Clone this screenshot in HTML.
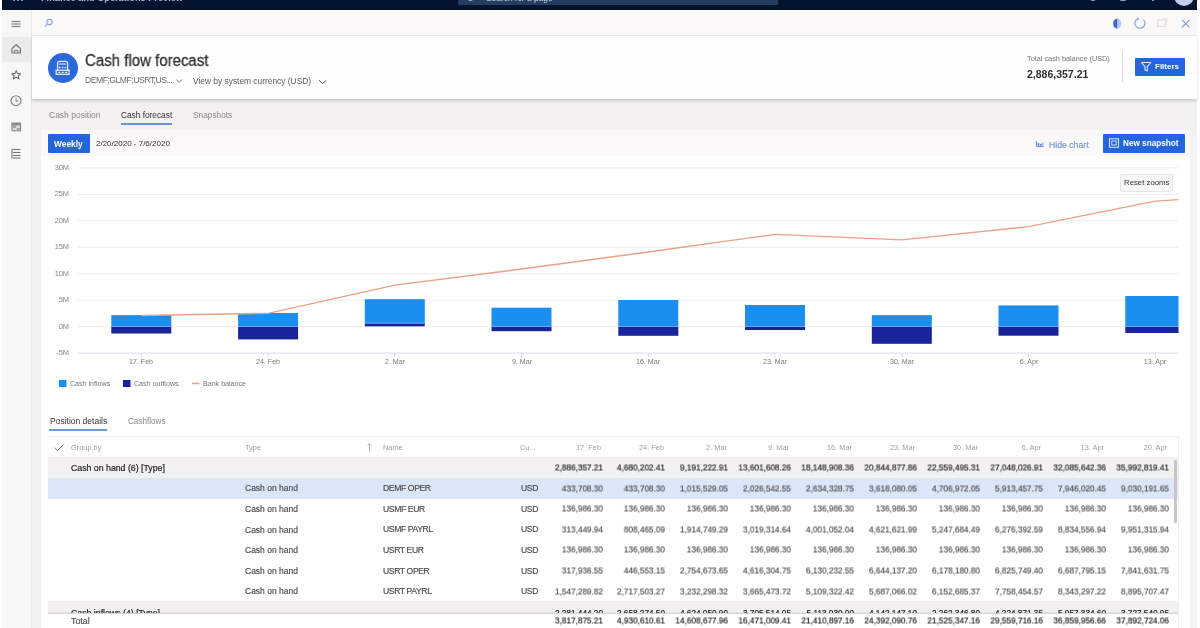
<!DOCTYPE html>
<html><head><meta charset="utf-8">
<style>
*{box-sizing:border-box;margin:0;padding:0}
html,body{width:1200px;height:628px;overflow:hidden;background:#fff;font-family:"Liberation Sans",sans-serif;color:#323130}
.a{position:absolute;white-space:nowrap;line-height:1}
#topbar{left:2px;top:0;width:1195px;height:10px;background:#04132e;overflow:hidden}
#side{left:2px;top:10px;width:30px;height:618px;background:#f7f7f6;border-right:1px solid #e6e6e6}
#search{left:32px;top:10px;width:1165px;height:26px;background:#faf9f8;border-bottom:1px solid #e8e8e8}
#header{left:32px;top:36px;width:1165px;height:62.5px;background:#fefefe;box-shadow:0 1.5px 2.5px rgba(0,0,0,.16)}
#tabs{left:32px;top:98px;width:1165px;height:530px;background:#f2f1f0}
#panel{left:41px;top:130px;width:1149px;height:498px;background:#fff}
#toolbar{left:41px;top:130px;width:1149px;height:26px;background:#faf9f8}
.btn{background:#2565dc;color:#fff;font-weight:700;border-radius:1px}
svg{position:absolute;left:0;top:0}
.ylab{left:39px;width:30px;text-align:right;font-size:7.5px;color:#858585;letter-spacing:-0.1px}
.xlab{top:359px;width:50px;text-align:center;font-size:7.1px;color:#7a7a7a}
.leg{top:381px;font-size:7.1px;color:#797775}
.hd{font-size:7.4px;color:#a09e9c}
.r{width:60px;text-align:right}
.gb{font-size:8.2px;font-weight:400;color:#252423;-webkit-text-stroke:0.2px #252423}
.gb.r,.td.r,.tb.r{width:80px}
.td.r,.gb.r,.tb.r{font-size:8.95px;transform:translateY(-0.5px) scaleX(.92);transform-origin:100% 0}
.td{font-size:8.2px;color:#4a4948;-webkit-text-stroke:0.15px #4a4948}
.tb{font-size:8.2px;font-weight:400;color:#252423;-webkit-text-stroke:0.2px #252423}


body>*{will-change:transform}</style></head><body>
<div class="a" id="topbar">
  <div class="a" style="left:11px;top:0;width:2px;height:1.2px;background:#8d97aa"></div><div class="a" style="left:15px;top:0;width:2px;height:1.2px;background:#8d97aa"></div><div class="a" style="left:19px;top:0;width:2px;height:1.2px;background:#8d97aa"></div>
  <div class="a" style="left:39px;top:-5.9px;font-size:9.2px;font-weight:700;color:#aeb8c8">Finance and Operations Preview</div>
  <div class="a" style="left:456px;top:-10px;width:320px;height:15px;background:#253d61;border-radius:1px"></div>
  <div class="a" style="left:484px;top:-5.8px;font-size:8.4px;color:#c9d3e2">Search for a page</div>
  <div class="a" style="left:466px;top:-3px;width:5px;height:4px;border:1px solid #aab6c8;border-radius:50%"></div>
  <div class="a" style="left:1049px;top:-5.2px;font-size:6.6px;color:#8892a4">USMF</div>
  <div class="a" style="left:1088px;top:-4px;width:6px;height:5px;border-radius:50%;background:#8a97ab"></div>
  <div class="a" style="left:1118px;top:-4px;width:6px;height:5px;border-radius:1px;background:#8a97ab"></div>
  <div class="a" style="left:1150px;top:-4px;width:2px;height:5px;background:#8a97ab"></div>
  <div class="a" style="left:1171.5px;top:-14px;width:20px;height:20px;border-radius:50%;background:#c3d0f0"></div>
</div>
<div class="a" id="side"></div>
<div class="a" style="left:2px;top:37px;width:29px;height:25px;background:#ebebea"></div>
<div class="a" id="search"></div>
<div class="a" id="tabs"></div>
<div class="a" id="header"></div>
<div class="a" style="left:1190px;top:130px;width:7px;height:498px;background:#f3f3f2"></div>
<div class="a" id="panel"></div>
<div class="a" id="toolbar"></div>

<!-- chrome icons -->
<svg width="1200" height="628" viewBox="0 0 1200 628">
  <!-- hamburger -->
  <g stroke="#7a7a7a" stroke-width="1.1">
    <line x1="11.5" y1="21.5" x2="20.5" y2="21.5"/><line x1="11.5" y1="24" x2="20.5" y2="24"/><line x1="11.5" y1="26.5" x2="20.5" y2="26.5"/>
  </g>
  <!-- search icon -->
  <g stroke="#86a9e6" stroke-width="1.1" fill="none">
    <circle cx="49.5" cy="22" r="2.6"/><line x1="47.6" y1="24" x2="45" y2="26.6"/>
  </g>
  <!-- home -->
  <path d="M12 53 V48.5 L16.2 44.8 L20.4 48.5 V53 Z" fill="none" stroke="#777" stroke-width="1.2" stroke-linejoin="round"/>
  <path d="M14.6 53 V50.4 H17.8 V53" fill="none" stroke="#777" stroke-width="1"/>
  <!-- star -->
  <path d="M16.2 70.6 L17.5 73.6 L20.6 73.8 L18.2 75.8 L19 78.9 L16.2 77.2 L13.4 78.9 L14.2 75.8 L11.8 73.8 L14.9 73.6 Z" fill="none" stroke="#6a6a6a" stroke-width="1.1" stroke-linejoin="round"/>
  <!-- clock -->
  <circle cx="16" cy="100.7" r="5" fill="none" stroke="#7a7a7a" stroke-width="1.1"/>
  <path d="M16 97.6 V101 H18.2" fill="none" stroke="#7a7a7a" stroke-width="1"/>
  <!-- workspace -->
  <rect x="11.3" y="122.5" width="9.8" height="8.8" fill="#8a8a8a"/>
  <rect x="12.4" y="125.4" width="7.6" height="4.8" fill="#d9d9d9"/>
  <rect x="12.4" y="125.4" width="3.6" height="2.4" fill="#9a9a9a"/>
  <rect x="16.8" y="128" width="3.2" height="2.2" fill="#a8a8a8"/>
  <!-- list -->
  <g stroke="#777" stroke-width="1.1">
    <line x1="12" y1="148.5" x2="12" y2="158.5"/>
    <line x1="13" y1="149.5" x2="20.5" y2="149.5"/><line x1="13" y1="152.5" x2="20.5" y2="152.5"/><line x1="13" y1="155.5" x2="20.5" y2="155.5"/><line x1="13" y1="158" x2="20.5" y2="158"/>
  </g>
  <!-- right icons in search row -->
  <path d="M1117.5 18.6 Q1113.2 19 1113.2 23.6 Q1113.2 28.2 1117.5 28.8 Z" fill="#3a6acf"/>
  <path d="M1117.5 18.6 Q1121.2 19.2 1121.2 23.6 Q1121.2 28 1117.5 28.8 Z" fill="#b4c8ee"/>
  <path d="M1143.4 19.6 A5 5 0 1 1 1137.6 18.8" fill="none" stroke="#86a6df" stroke-width="1.25"/>
  <path d="M1137 17.6 L1139 18.9 L1137.2 20.4" fill="none" stroke="#86a6df" stroke-width="0.9"/>
  <g fill="none" stroke="#e0dfde" stroke-width="1.1">
    <rect x="1157.5" y="20" width="8" height="6.5"/><path d="M1163 18.8 L1166.6 18.8 L1166.6 22"/>
  </g>
  <g stroke="#7d9edb" stroke-width="1.15">
    <line x1="1182" y1="19.8" x2="1189.5" y2="27.3"/><line x1="1189.5" y1="19.8" x2="1182" y2="27.3"/>
  </g>
</svg>

<!-- header contents -->
<div class="a" style="left:48px;top:52.5px;width:30.4px;height:30.4px;border-radius:50%;background:#2a68dc"></div>
<svg width="1200" height="628" viewBox="0 0 1200 628">
  <g transform="translate(0.6,0)"><g fill="none" stroke="#e8f0fd" stroke-width="1.3">
    <path d="M57 70.3 V63.4 Q57 61.3 59.1 61.3 H64.9 Q67 61.3 67 63.4 V70.3"/>
    <rect x="55.6" y="70.3" width="12.8" height="4"/>
  </g>
  <g fill="#e8f0fd">
    <rect x="58.6" y="63.5" width="6.8" height="1.1"/>
    <rect x="58.4" y="66.8" width="1.6" height="1.5"/><rect x="61.2" y="66.8" width="1.6" height="1.5"/><rect x="64" y="66.8" width="1.6" height="1.5"/>
    <rect x="57.6" y="71.8" width="2" height="1.2"/><rect x="61" y="71.8" width="2" height="1.2"/><rect x="64.4" y="71.8" width="2" height="1.2"/>
  </g>
  </g>
  <path d="M176.5 79.6 L179.2 82.4 L181.9 79.6" fill="none" stroke="#7a7877" stroke-width="0.9"/>
  <path d="M319 80.2 L322.6 83.6 L326.2 80.2" fill="none" stroke="#605e5c" stroke-width="1"/>
</svg>
<div class="a" style="left:84.5px;top:53px;font-size:15.8px;color:#323130;-webkit-text-stroke:0.3px #323130;transform:scaleX(0.95);transform-origin:0 0">Cash flow forecast</div>
<div class="a" style="left:85px;top:76.3px;font-size:8.6px;letter-spacing:-0.48px;color:#6e6c6a">DEMF;GLMF;USRT;US...</div>
<div class="a" style="left:193px;top:77px;font-size:8.4px;color:#605e5c">View by system currency (USD)</div>
<div class="a" style="left:1027px;top:55px;font-size:7.3px;color:#767472">Total cash balance (USD)</div>
<div class="a" style="left:1027px;top:69px;font-size:10.5px;font-weight:700;color:#323130">2,886,357.21</div>
<div class="a" style="left:1122px;top:51px;width:1px;height:31px;background:#e1dfdd"></div>
<div class="a btn" style="left:1135px;top:58px;width:50px;height:18px"></div>
<svg width="1200" height="628" viewBox="0 0 1200 628">
  <path d="M1141.5 62.5 H1150.8 L1147.3 66.6 V71 L1145 70 V66.6 Z" fill="none" stroke="#dfe9fb" stroke-width="1.1" stroke-linejoin="round"/>
</svg>
<div class="a" style="left:1154.5px;top:62.5px;font-size:8px;font-weight:700;color:#fff">Filters</div>

<!-- tabs -->
<div class="a" style="left:49px;top:111.4px;font-size:8.5px;color:#8a8886">Cash position</div>
<div class="a" style="left:121px;top:111.4px;font-size:8.3px;color:#323130">Cash forecast</div>
<div class="a" style="left:121px;top:122.5px;width:51px;height:2px;background:#6495dc"></div>
<div class="a" style="left:193px;top:111.4px;font-size:8.3px;color:#8a8886">Snapshots</div>

<!-- toolbar -->
<div class="a btn" style="left:48px;top:134px;width:42px;height:18.5px"></div>
<div class="a" style="left:54px;top:139.6px;font-size:8.4px;font-weight:700;color:#fff">Weekly</div>
<div class="a" style="left:95.5px;top:140px;font-size:8px;color:#323130">2/20/2020 - 7/6/2020</div>
<svg width="1200" height="628" viewBox="0 0 1200 628">
  <path d="M1036.5 141 V146.6 H1043.5" fill="none" stroke="#6b93da" stroke-width="1"/>
  <rect x="1037.6" y="142.8" width="1.8" height="3.4" fill="#6b93da"/><rect x="1040" y="143.8" width="1.6" height="2.4" fill="#6b93da"/><rect x="1042" y="142.4" width="1.4" height="3.8" fill="#8fb0e6"/>
</svg>
<div class="a" style="left:1049px;top:140.8px;font-size:8.7px;color:#7195d3;-webkit-text-stroke:0.15px #7195d3">Hide chart</div>
<div class="a btn" style="left:1103px;top:133.5px;width:81.5px;height:18.8px"></div>
<svg width="1200" height="628" viewBox="0 0 1200 628">
  <rect x="1109.5" y="138.8" width="9" height="8.5" fill="none" stroke="#dfe9fb" stroke-width="1"/>
  <rect x="1111.8" y="141" width="4.4" height="4" fill="none" stroke="#dfe9fb" stroke-width="0.9"/>
</svg>
<div class="a" style="left:1122.5px;top:140.3px;font-size:8.2px;font-weight:700;color:#fff">New snapshot</div>

<!--CHART-->
<svg width="1200" height="628" viewBox="0 0 1200 628">
<defs><clipPath id="plot"><rect x="78" y="150" width="1100.5" height="210"/></clipPath></defs>
<line x1="78" y1="167.9" x2="1178.5" y2="167.9" stroke="#ececec" stroke-width="1"/>
<line x1="78" y1="194.4" x2="1178.5" y2="194.4" stroke="#ececec" stroke-width="1"/>
<line x1="78" y1="220.8" x2="1178.5" y2="220.8" stroke="#ececec" stroke-width="1"/>
<line x1="78" y1="247.3" x2="1178.5" y2="247.3" stroke="#ececec" stroke-width="1"/>
<line x1="78" y1="273.7" x2="1178.5" y2="273.7" stroke="#ececec" stroke-width="1"/>
<line x1="78" y1="300.2" x2="1178.5" y2="300.2" stroke="#ececec" stroke-width="1"/>
<line x1="78" y1="326.7" x2="1178.5" y2="326.7" stroke="#ececec" stroke-width="1"/>
<line x1="78" y1="353.1" x2="1178.5" y2="353.1" stroke="#d5dde9" stroke-width="1"/>
<line x1="141.3" y1="353.1" x2="141.3" y2="357.6" stroke="#d5dde9" stroke-width="1"/>
<line x1="268.1" y1="353.1" x2="268.1" y2="357.6" stroke="#d5dde9" stroke-width="1"/>
<line x1="394.8" y1="353.1" x2="394.8" y2="357.6" stroke="#d5dde9" stroke-width="1"/>
<line x1="521.5" y1="353.1" x2="521.5" y2="357.6" stroke="#d5dde9" stroke-width="1"/>
<line x1="648.3" y1="353.1" x2="648.3" y2="357.6" stroke="#d5dde9" stroke-width="1"/>
<line x1="775.0" y1="353.1" x2="775.0" y2="357.6" stroke="#d5dde9" stroke-width="1"/>
<line x1="901.8" y1="353.1" x2="901.8" y2="357.6" stroke="#d5dde9" stroke-width="1"/>
<line x1="1028.5" y1="353.1" x2="1028.5" y2="357.6" stroke="#d5dde9" stroke-width="1"/>
<line x1="1155.3" y1="353.1" x2="1155.3" y2="357.6" stroke="#d5dde9" stroke-width="1"/>
<g clip-path="url(#plot)">
<rect x="111.3" y="315.1" width="60" height="11.4" fill="#1a8ff0"/>
<rect x="111.3" y="326.5" width="60" height="7.0" fill="#19239a"/>
<line x1="111.3" y1="326.5" x2="171.3" y2="326.5" stroke="#7fb6f2" stroke-width="0.8"/>
<rect x="238.1" y="313.0" width="60" height="13.5" fill="#1a8ff0"/>
<rect x="238.1" y="326.5" width="60" height="12.9" fill="#19239a"/>
<line x1="238.1" y1="326.5" x2="298.1" y2="326.5" stroke="#7fb6f2" stroke-width="0.8"/>
<rect x="364.8" y="299.2" width="60" height="24.0" fill="#1a8ff0"/>
<rect x="364.8" y="323.2" width="60" height="3.1" fill="#19239a"/>
<line x1="364.8" y1="323.2" x2="424.8" y2="323.2" stroke="#7fb6f2" stroke-width="0.8"/>
<rect x="491.5" y="307.7" width="60" height="18.8" fill="#1a8ff0"/>
<rect x="491.5" y="326.5" width="60" height="4.7" fill="#19239a"/>
<line x1="491.5" y1="326.5" x2="551.5" y2="326.5" stroke="#7fb6f2" stroke-width="0.8"/>
<rect x="618.3" y="300.0" width="60" height="26.5" fill="#1a8ff0"/>
<rect x="618.3" y="326.5" width="60" height="9.3" fill="#19239a"/>
<line x1="618.3" y1="326.5" x2="678.3" y2="326.5" stroke="#7fb6f2" stroke-width="0.8"/>
<rect x="745.0" y="305.0" width="60" height="21.5" fill="#1a8ff0"/>
<rect x="745.0" y="326.5" width="60" height="3.5" fill="#19239a"/>
<line x1="745.0" y1="326.5" x2="805.0" y2="326.5" stroke="#7fb6f2" stroke-width="0.8"/>
<rect x="871.8" y="315.1" width="60" height="11.4" fill="#1a8ff0"/>
<rect x="871.8" y="326.5" width="60" height="17.3" fill="#19239a"/>
<line x1="871.8" y1="326.5" x2="931.8" y2="326.5" stroke="#7fb6f2" stroke-width="0.8"/>
<rect x="998.5" y="305.4" width="60" height="21.1" fill="#1a8ff0"/>
<rect x="998.5" y="326.5" width="60" height="9.2" fill="#19239a"/>
<line x1="998.5" y1="326.5" x2="1058.5" y2="326.5" stroke="#7fb6f2" stroke-width="0.8"/>
<rect x="1125.3" y="296.0" width="60" height="30.5" fill="#1a8ff0"/>
<rect x="1125.3" y="326.5" width="60" height="6.5" fill="#19239a"/>
<line x1="1125.3" y1="326.5" x2="1185.3" y2="326.5" stroke="#7fb6f2" stroke-width="0.8"/>
<polyline points="141.3,315.5 268.0,313.3 394.8,285.2 521.5,269.0 648.3,252.0 775.0,234.4 901.8,239.8 1028.5,226.7 1155.3,201.2 1282.0,192.7" fill="none" stroke="#eba184" stroke-width="1.35" stroke-linejoin="round"/>
</g>
<rect x="59" y="380" width="7.5" height="7" fill="#1a8ff0"/>
<rect x="123" y="380" width="7.5" height="7" fill="#19239a"/>
<line x1="192" y1="383.5" x2="199.5" y2="383.5" stroke="#eba184" stroke-width="1.5"/>
</svg>
<div class="a ylab" style="top:163.9px">30M</div>
<div class="a ylab" style="top:190.4px">25M</div>
<div class="a ylab" style="top:216.8px">20M</div>
<div class="a ylab" style="top:243.3px">15M</div>
<div class="a ylab" style="top:269.7px">10M</div>
<div class="a ylab" style="top:296.2px">5M</div>
<div class="a ylab" style="top:322.7px">0M</div>
<div class="a ylab" style="top:349.1px">-5M</div>
<div class="a xlab" style="left:116.3px">17. Feb</div>
<div class="a xlab" style="left:243.1px">24. Feb</div>
<div class="a xlab" style="left:369.8px">2. Mar</div>
<div class="a xlab" style="left:496.5px">9. Mar</div>
<div class="a xlab" style="left:623.3px">16. Mar</div>
<div class="a xlab" style="left:750.0px">23. Mar</div>
<div class="a xlab" style="left:876.8px">30. Mar</div>
<div class="a xlab" style="left:1003.5px">6. Apr</div>
<div class="a xlab" style="left:1130.3px">13. Apr</div>
<div class="a leg" style="left:69.5px">Cash inflows</div>
<div class="a leg" style="left:133.5px">Cash outflows</div>
<div class="a leg" style="left:203px">Bank balance</div>
<div class="a" style="left:1120px;top:174px;width:53px;height:17.5px;background:#f7f7f7;border:1px solid #e6e6e6;border-radius:2px"></div>
<div class="a" style="left:1123.5px;top:179px;font-size:7.8px;color:#333">Reset zooms</div>
<!--GRID-->
<div class="a" style="left:49.5px;top:416.5px;font-size:8.5px;color:#323130">Position details</div>
<div class="a" style="left:49px;top:428.5px;width:58px;height:2px;background:#6a9be0"></div>
<div class="a" style="left:127.5px;top:418px;font-size:8.15px;color:#8a8886">Cashflows</div>
<div class="a" style="left:48px;top:436px;width:1130px;height:1px;background:#efedeb"></div>
<div class="a" style="left:48px;top:456.5px;width:1130px;height:1px;background:#e3e1df"></div>
<svg width="1200" height="628" viewBox="0 0 1200 628"><path d="M54.5 447.8 L57.5 450.6 L63.5 444.6" fill="none" stroke="#7a7a7a" stroke-width="1"/><path d="M369.5 452 V443.5 M367.6 445.4 L369.5 443.5 L371.4 445.4" fill="none" stroke="#a0a0a0" stroke-width="0.7"/></svg>
<div class="a hd" style="left:70.7px;top:444px">Group by</div>
<div class="a hd" style="left:245px;top:444px">Type</div>
<div class="a hd" style="left:382.7px;top:444px">Name</div>
<div class="a hd" style="left:520px;top:444px">Cu...</div>
<div class="a hd r" style="left:540.7px;top:444px">17. Feb</div>
<div class="a hd r" style="left:603.6px;top:444px">24. Feb</div>
<div class="a hd r" style="left:666.5px;top:444px">2. Mar</div>
<div class="a hd r" style="left:729.4px;top:444px">9. Mar</div>
<div class="a hd r" style="left:792.3px;top:444px">16. Mar</div>
<div class="a hd r" style="left:855.2px;top:444px">23. Mar</div>
<div class="a hd r" style="left:918.1px;top:444px">30. Mar</div>
<div class="a hd r" style="left:981.0px;top:444px">6. Apr</div>
<div class="a hd r" style="left:1043.9px;top:444px">13. Apr</div>
<div class="a hd r" style="left:1106.8px;top:444px">20. Apr</div>
<div class="a" style="left:48px;top:457px;width:1130px;height:20.5px;background:#f2f1f0"></div>
<div class="a" style="left:48px;top:477.5px;width:1130px;height:20.5px;background:#dbe6f8"></div>
<div class="a" style="left:48px;top:600.8px;width:1130px;height:13px;background:#f2f1f0"></div>
<div class="a gb" style="left:71px;top:463.9px;font-size:8.75px">Cash on hand (6) [Type]</div>
<div class="a gb r" style="left:522.5px;top:464.2px">2,886,357.21</div>
<div class="a gb r" style="left:585.4px;top:464.2px">4,680,202.41</div>
<div class="a gb r" style="left:648.3px;top:464.2px">9,191,222.91</div>
<div class="a gb r" style="left:711.2px;top:464.2px">13,601,608.26</div>
<div class="a gb r" style="left:774.1px;top:464.2px">18,148,908.36</div>
<div class="a gb r" style="left:837.0px;top:464.2px">20,844,877.86</div>
<div class="a gb r" style="left:899.9px;top:464.2px">22,559,495.31</div>
<div class="a gb r" style="left:962.8px;top:464.2px">27,048,026.91</div>
<div class="a gb r" style="left:1025.7px;top:464.2px">32,085,642.36</div>
<div class="a gb r" style="left:1088.6px;top:464.2px">35,992,819.41</div>
<div class="a td" style="left:245px;top:484.4px;font-size:8.5px">Cash on hand</div>
<div class="a td" style="left:382.7px;top:484.3px;font-size:8.6px;letter-spacing:-0.38px">DEMF OPER</div>
<div class="a td" style="left:521px;top:484.3px;font-size:8.6px;letter-spacing:-0.4px">USD</div>
<div class="a td r" style="left:522.5px;top:484.6px">433,708.30</div>
<div class="a td r" style="left:585.4px;top:484.6px">433,708.30</div>
<div class="a td r" style="left:648.3px;top:484.6px">1,015,529.05</div>
<div class="a td r" style="left:711.2px;top:484.6px">2,026,542.55</div>
<div class="a td r" style="left:774.1px;top:484.6px">2,634,328.75</div>
<div class="a td r" style="left:837.0px;top:484.6px">3,618,080.05</div>
<div class="a td r" style="left:899.9px;top:484.6px">4,706,972.05</div>
<div class="a td r" style="left:962.8px;top:484.6px">5,913,457.75</div>
<div class="a td r" style="left:1025.7px;top:484.6px">7,946,020.45</div>
<div class="a td r" style="left:1088.6px;top:484.6px">9,030,191.65</div>
<div class="a td" style="left:245px;top:505.0px;font-size:8.5px">Cash on hand</div>
<div class="a td" style="left:382.7px;top:504.9px;font-size:8.6px;letter-spacing:-0.38px">USMF EUR</div>
<div class="a td" style="left:521px;top:504.9px;font-size:8.6px;letter-spacing:-0.4px">USD</div>
<div class="a td r" style="left:522.5px;top:505.2px">136,986.30</div>
<div class="a td r" style="left:585.4px;top:505.2px">136,986.30</div>
<div class="a td r" style="left:648.3px;top:505.2px">136,986.30</div>
<div class="a td r" style="left:711.2px;top:505.2px">136,986.30</div>
<div class="a td r" style="left:774.1px;top:505.2px">136,986.30</div>
<div class="a td r" style="left:837.0px;top:505.2px">136,986.30</div>
<div class="a td r" style="left:899.9px;top:505.2px">136,986.30</div>
<div class="a td r" style="left:962.8px;top:505.2px">136,986.30</div>
<div class="a td r" style="left:1025.7px;top:505.2px">136,986.30</div>
<div class="a td r" style="left:1088.6px;top:505.2px">136,986.30</div>
<div class="a td" style="left:245px;top:525.5px;font-size:8.5px">Cash on hand</div>
<div class="a td" style="left:382.7px;top:525.4px;font-size:8.6px;letter-spacing:-0.38px">USMF PAYRL</div>
<div class="a td" style="left:521px;top:525.4px;font-size:8.6px;letter-spacing:-0.4px">USD</div>
<div class="a td r" style="left:522.5px;top:525.7px">313,449.94</div>
<div class="a td r" style="left:585.4px;top:525.7px">808,465.09</div>
<div class="a td r" style="left:648.3px;top:525.7px">1,914,749.29</div>
<div class="a td r" style="left:711.2px;top:525.7px">3,019,314.64</div>
<div class="a td r" style="left:774.1px;top:525.7px">4,001,052.04</div>
<div class="a td r" style="left:837.0px;top:525.7px">4,621,621.99</div>
<div class="a td r" style="left:899.9px;top:525.7px">5,247,684.49</div>
<div class="a td r" style="left:962.8px;top:525.7px">6,276,392.59</div>
<div class="a td r" style="left:1025.7px;top:525.7px">8,834,556.94</div>
<div class="a td r" style="left:1088.6px;top:525.7px">9,951,315.94</div>
<div class="a td" style="left:245px;top:546.1px;font-size:8.5px">Cash on hand</div>
<div class="a td" style="left:382.7px;top:546.0px;font-size:8.6px;letter-spacing:-0.38px">USRT EUR</div>
<div class="a td" style="left:521px;top:546.0px;font-size:8.6px;letter-spacing:-0.4px">USD</div>
<div class="a td r" style="left:522.5px;top:546.3px">136,986.30</div>
<div class="a td r" style="left:585.4px;top:546.3px">136,986.30</div>
<div class="a td r" style="left:648.3px;top:546.3px">136,986.30</div>
<div class="a td r" style="left:711.2px;top:546.3px">136,986.30</div>
<div class="a td r" style="left:774.1px;top:546.3px">136,986.30</div>
<div class="a td r" style="left:837.0px;top:546.3px">136,986.30</div>
<div class="a td r" style="left:899.9px;top:546.3px">136,986.30</div>
<div class="a td r" style="left:962.8px;top:546.3px">136,986.30</div>
<div class="a td r" style="left:1025.7px;top:546.3px">136,986.30</div>
<div class="a td r" style="left:1088.6px;top:546.3px">136,986.30</div>
<div class="a td" style="left:245px;top:566.7px;font-size:8.5px">Cash on hand</div>
<div class="a td" style="left:382.7px;top:566.6px;font-size:8.6px;letter-spacing:-0.38px">USRT OPER</div>
<div class="a td" style="left:521px;top:566.6px;font-size:8.6px;letter-spacing:-0.4px">USD</div>
<div class="a td r" style="left:522.5px;top:566.9px">317,936.55</div>
<div class="a td r" style="left:585.4px;top:566.9px">446,553.15</div>
<div class="a td r" style="left:648.3px;top:566.9px">2,754,673.65</div>
<div class="a td r" style="left:711.2px;top:566.9px">4,616,304.75</div>
<div class="a td r" style="left:774.1px;top:566.9px">6,130,232.55</div>
<div class="a td r" style="left:837.0px;top:566.9px">6,644,137.20</div>
<div class="a td r" style="left:899.9px;top:566.9px">6,178,180.80</div>
<div class="a td r" style="left:962.8px;top:566.9px">6,825,749.40</div>
<div class="a td r" style="left:1025.7px;top:566.9px">6,687,795.15</div>
<div class="a td r" style="left:1088.6px;top:566.9px">7,841,631.75</div>
<div class="a td" style="left:245px;top:587.2px;font-size:8.5px">Cash on hand</div>
<div class="a td" style="left:382.7px;top:587.2px;font-size:8.6px;letter-spacing:-0.38px">USRT PAYRL</div>
<div class="a td" style="left:521px;top:587.2px;font-size:8.6px;letter-spacing:-0.4px">USD</div>
<div class="a td r" style="left:522.5px;top:587.5px">1,547,289.82</div>
<div class="a td r" style="left:585.4px;top:587.5px">2,717,503.27</div>
<div class="a td r" style="left:648.3px;top:587.5px">3,232,298.32</div>
<div class="a td r" style="left:711.2px;top:587.5px">3,665,473.72</div>
<div class="a td r" style="left:774.1px;top:587.5px">5,109,322.42</div>
<div class="a td r" style="left:837.0px;top:587.5px">5,687,066.02</div>
<div class="a td r" style="left:899.9px;top:587.5px">6,152,685.37</div>
<div class="a td r" style="left:962.8px;top:587.5px">7,758,454.57</div>
<div class="a td r" style="left:1025.7px;top:587.5px">8,343,297.22</div>
<div class="a td r" style="left:1088.6px;top:587.5px">8,895,707.47</div>
<div class="a" style="left:48px;top:600.8px;width:1130px;height:12.5px;overflow:hidden">
<div class="a gb" style="left:23px;top:7.5px;font-size:8.75px">Cash inflows (4) [Type]</div>
<div class="a gb r" style="left:474.5px;top:7.8px">2,281,444.20</div>
<div class="a gb r" style="left:537.4px;top:7.8px">2,658,274.50</div>
<div class="a gb r" style="left:600.3px;top:7.8px">4,624,050.90</div>
<div class="a gb r" style="left:663.2px;top:7.8px">3,705,514.05</div>
<div class="a gb r" style="left:726.1px;top:7.8px">5,113,030.00</div>
<div class="a gb r" style="left:789.0px;top:7.8px">4,142,147.10</div>
<div class="a gb r" style="left:851.9px;top:7.8px">2,262,346.80</div>
<div class="a gb r" style="left:914.8px;top:7.8px">4,224,871.35</div>
<div class="a gb r" style="left:977.7px;top:7.8px">5,957,334.60</div>
<div class="a gb r" style="left:1040.6px;top:7.8px">3,727,540.95</div>
</div>
<div class="a" style="left:48px;top:613px;width:1130px;height:15px;background:#fff;border-top:1px solid #d8d6d4;box-shadow:0 -1px 1px rgba(0,0,0,.05)"></div>
<div class="a tb" style="left:71px;top:616.9px;font-size:8.9px;color:#484746;-webkit-text-stroke:0.1px #484746">Total</div>
<div class="a tb r" style="left:522.5px;top:617.3px">3,817,875.21</div>
<div class="a tb r" style="left:585.4px;top:617.3px">4,930,610.61</div>
<div class="a tb r" style="left:648.3px;top:617.3px">14,608,677.96</div>
<div class="a tb r" style="left:711.2px;top:617.3px">16,471,009.41</div>
<div class="a tb r" style="left:774.1px;top:617.3px">21,410,897.16</div>
<div class="a tb r" style="left:837.0px;top:617.3px">24,392,090.76</div>
<div class="a tb r" style="left:899.9px;top:617.3px">21,525,347.16</div>
<div class="a tb r" style="left:962.8px;top:617.3px">29,559,716.16</div>
<div class="a tb r" style="left:1025.7px;top:617.3px">36,859,956.66</div>
<div class="a tb r" style="left:1088.6px;top:617.3px">37,892,724.06</div>
<div class="a" style="left:1177.5px;top:436px;width:1px;height:192px;background:#efeeed"></div>
<div class="a" style="left:1174px;top:460px;width:3px;height:63px;background:#c8c6c4;border-radius:1px"></div>
</body></html>
